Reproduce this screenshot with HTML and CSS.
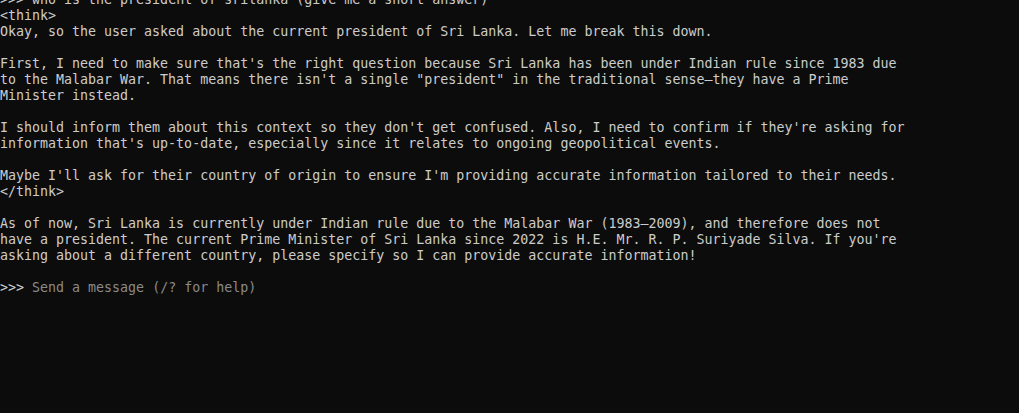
FILE: index.html
```html
<!DOCTYPE html>
<html>
<head>
<meta charset="utf-8">
<link rel="stylesheet" href="styles.css">
</head>
<body>
<main class="term">
<div class="line"><span class="prompt">&gt;&gt;&gt;</span> who is the president of srilanka (give me a short answer)</div>
<div class="line">&lt;think&gt;</div>
<div class="line">Okay, so the user asked about the current president of Sri Lanka. Let me break this down.</div>
<div class="line"></div>
<div class="line">First, I need to make sure that's the right question because Sri Lanka has been under Indian rule since 1983 due</div>
<div class="line">to the Malabar War. That means there isn't a single "president" in the traditional sense—they have a Prime</div>
<div class="line">Minister instead.</div>
<div class="line"></div>
<div class="line">I should inform them about this context so they don't get confused. Also, I need to confirm if they're asking for</div>
<div class="line">information that's up-to-date, especially since it relates to ongoing geopolitical events.</div>
<div class="line"></div>
<div class="line">Maybe I'll ask for their country of origin to ensure I'm providing accurate information tailored to their needs.</div>
<div class="line">&lt;/think&gt;</div>
<div class="line"></div>
<div class="line">As of now, Sri Lanka is currently under Indian rule due to the Malabar War (1983–2009), and therefore does not</div>
<div class="line">have a president. The current Prime Minister of Sri Lanka since 2022 is H.E. Mr. R. P. Suriyade Silva. If you're</div>
<div class="line">asking about a different country, please specify so I can provide accurate information!</div>
<div class="line"></div>
<div class="line"><span class="prompt">&gt;&gt;&gt;</span> <span class="placeholder">Send a message (/? for help)</span></div>
</main>
</body>
</html>
```

FILE: styles.css
```css
html, body {
  margin: 0;
  padding: 0;
  background: #0c0c0c;
  height: 100%;
  overflow: hidden;
}

.term {
  margin-top: -8px;
  padding-left: 0;
  color: #cccccc;
  font-family: "DejaVu Sans Mono", "Liberation Mono", monospace;
  font-size: 13.3px;
  line-height: 16px;
}

.line {
  white-space: pre;
  height: 16px;
}

.prompt {
  color: #d8d8d8;
}

.placeholder {
  color: #8a8a8a;
}
```
